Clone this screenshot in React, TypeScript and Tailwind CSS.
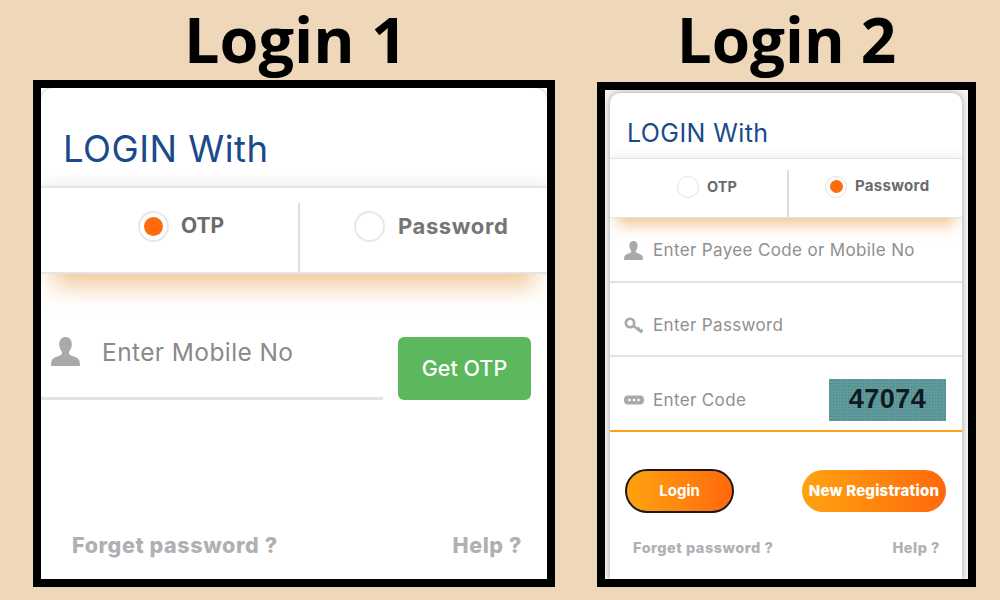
const UserIcon = ({ className }: { className: string }) => (
  <svg viewBox="0 0 30 30" className={className} fill="#a9a9a9">
    <path d="M15 0c-4 0-6.500 3-6.500 7.500 0 3.200 1.200 6 2.800 7.800.6 1.600-.2 3-2 3.800C5.500 20.500 1.500 21.500.5 25c-.3 1.500-.5 3-.5 5h30c0-2-.2-3.500-.5-5-1-3.500-5-4.500-8.800-5.900-1.800-.8-2.600-2.200-2-3.800 1.600-1.800 2.800-4.600 2.800-7.800C21.500 3 19 0 15 0z" />
  </svg>
);

const KeyIcon = () => (
  <svg viewBox="0 0 20 18" className="h-[18px] w-[20px] shrink-0" fill="none" stroke="#a9a9a9">
    <circle cx="6" cy="6" r="4.200" strokeWidth="2.600" />
    <path d="M9.500 9l8.500 6.500M13.500 12.500l2-2M16.500 14.500l2-2" strokeWidth="2.600" />
  </svg>
);

const CodeIcon = () => (
  <svg viewBox="0 0 20 10" className="h-[10px] w-[20px] shrink-0">
    <rect width="20" height="9" y="0.500" rx="4" fill="#a9a9a9" />
    <circle cx="5.500" cy="5" r="1.300" fill="#fff" />
    <circle cx="10" cy="5" r="1.300" fill="#fff" />
    <circle cx="14.500" cy="5" r="1.300" fill="#fff" />
  </svg>
);

const Title = ({ children, className }: { children: string; className: string }) => (
  <h1 className={`flex items-center justify-center font-['Open_Sans',sans-serif] font-bold leading-none text-black ${className}`}>
    {children}
  </h1>
);

export default function App() {
  return (
    <div className="flex h-[600px] w-[1000px] items-start overflow-hidden bg-[#efd7ba] pl-[33px] font-[Inter,sans-serif]">
      {/* Login 1 */}
      <div className="w-[522px] shrink-0">
        <Title className="h-[80px] pb-[4px] pl-[3px] text-[63px]">Login 1</Title>
        <div className="h-[507px] border-8 border-black bg-white">
          <div className="flex h-full flex-col overflow-hidden rounded-t-[12px] bg-white shadow-[0_0_3px_rgba(0,0,0,0.35)]">
            <div className="flex h-[98px] items-end pb-[12px] pl-[22px] text-[36.500px] leading-[50px] tracking-[0.5px] text-[#1a4a8a]">
              LOGIN With
            </div>
            <div className="flex h-[88px] shrink-0 border-y-2 border-[#e4e4e4] bg-white shadow-[0_-6px_10px_rgba(0,0,0,0.05),0_24px_24px_-12px_rgba(235,175,105,0.7)]">
              <div className="flex w-[257px] items-center pb-[8px] pl-[97px]">
                <span className="flex h-[31px] w-[31px] items-center justify-center rounded-full border-2 border-[#e8e8e8]">
                  <span className="h-[19px] w-[19px] rounded-full bg-[#ff6a0d]" />
                </span>
                <span className="ml-[12px] text-[21px] font-bold text-[#6b6b6b]">OTP</span>
              </div>
              <div className="mt-[15px] w-[2px] bg-[#dedede]" />
              <div className="flex flex-1 items-center pb-[8px] pl-[54px]">
                <span className="h-[31px] w-[31px] rounded-full border-2 border-[#e8e8e8]" />
                <span className="ml-[13px] text-[22px] font-bold tracking-[0.6px] text-[#757575]">Password</span>
              </div>
            </div>
            <div className="mt-[63px] flex">
              <div className="flex h-[63px] w-[342px] items-start border-b-[3px] border-[#e2e2e2] pl-[10px]">
                <UserIcon className="h-[29px] w-[29px] shrink-0" />
                <span className="ml-[22px] text-[24.500px] leading-[30px] tracking-[0.4px] text-[#8a8a8a]">Enter Mobile No</span>
              </div>
              <button className="ml-[15px] h-[63px] w-[133px] rounded-[6px] bg-[#5cb85c] text-[21.500px] font-medium text-white">
                Get OTP
              </button>
            </div>
            <div className="mt-auto flex justify-between pb-[18px] pl-[31px] pr-[25px] text-[21.500px] font-extrabold leading-[32px] tracking-[0.6px] text-[#b0b0b4]">
              <span>Forget password ?</span>
              <span>Help ?</span>
            </div>
          </div>
        </div>
      </div>

      {/* Login 2 */}
      <div className="ml-[42px] w-[379px] shrink-0">
        <Title className="h-[82px] pb-[4px] text-[62px]">Login 2</Title>
        <div className="h-[505px] border-8 border-black bg-[#f4f4f4] pl-[5px] pr-[6px] pt-[3px]">
          <div className="flex h-full flex-col overflow-hidden rounded-t-[10px] bg-white shadow-[0_0_6px_rgba(0,0,0,0.35)]">
            <div className="flex h-[65px] items-end pb-[8px] pl-[17px] text-[25px] leading-[34px] tracking-[0.4px] text-[#1a4a8a]">
              LOGIN With
            </div>
            <div className="flex h-[60px] shrink-0 border-y border-[#e2e2e2] bg-white shadow-[0_-4px_8px_rgba(0,0,0,0.05),0_14px_14px_-7px_rgba(235,175,105,0.7)]">
              <div className="flex w-[177px] items-center pl-[67px] pb-[3px]">
                <span className="h-[22px] w-[22px] rounded-full border border-[#e2e2e2]" />
                <span className="ml-[8px] text-[14.500px] font-bold text-[#6b6b6b]">OTP</span>
              </div>
              <div className="mt-[11px] w-[2px] bg-[#dedede]" />
              <div className="flex flex-1 items-center pl-[36px] pb-[3px]">
                <span className="flex h-[22px] w-[22px] items-center justify-center rounded-full border border-[#e2e2e2]">
                  <span className="h-[13px] w-[13px] rounded-full bg-[#ff6a0d]" />
                </span>
                <span className="ml-[8px] text-[15px] font-bold tracking-[0.3px] text-[#6b6b6b]">Password</span>
              </div>
            </div>
            <div className="flex h-[65px] shrink-0 items-center gap-[10px] border-b-2 border-[#e2e2e2] pl-[14px] pt-[2px] text-[17px] tracking-[0.35px] text-[#8f8f8f]">
              <UserIcon className="h-[19px] w-[19px] shrink-0" />
              <span>Enter Payee Code or Mobile No</span>
            </div>
            <div className="flex h-[74px] shrink-0 items-center gap-[9px] border-b-2 border-[#e2e2e2] pl-[14px] pt-[14px] text-[17px] tracking-[0.35px] text-[#8f8f8f]">
              <KeyIcon />
              <span>Enter Password</span>
            </div>
            <div className="flex h-[75px] shrink-0 items-center border-b-2 border-[#ffa21a] pl-[14px] pr-[16px] pt-[12px] text-[17px] tracking-[0.35px] text-[#8f8f8f]">
              <CodeIcon />
              <span className="ml-[9px] mt-[2px]">Enter Code</span>
              <span className="ml-auto flex h-[42px] w-[117px] items-center justify-center bg-[#5f9a9b] bg-[radial-gradient(#4b8096_1px,transparent_1px)] bg-[length:3px_3px] font-['Liberation_Sans',sans-serif] text-[27px] font-bold tracking-[0.5px] text-[#0f1a20]">
                47074
              </span>
            </div>
            <div className="mt-[37px] flex items-center justify-between pl-[15px] pr-[16px] text-[15px] font-bold text-white">
              <button className="h-[44px] w-[109px] rounded-full border-2 border-[#1a1a1a] bg-gradient-to-r from-[#ffa20f] to-[#ff680d]">
                Login
              </button>
              <button className="h-[42px] w-[144px] rounded-full bg-gradient-to-r from-[#ffa20f] to-[#ff680d] text-[15px] font-extrabold tracking-[0.2px]">
                New Registration
              </button>
            </div>
            <div className="mt-[24px] flex justify-between pl-[23px] pr-[22px] text-[14.500px] font-extrabold leading-[22px] tracking-[0.5px] text-[#b0b0b4]">
              <span>Forget password ?</span>
              <span>Help ?</span>
            </div>
          </div>
        </div>
      </div>
    </div>
  );
}
